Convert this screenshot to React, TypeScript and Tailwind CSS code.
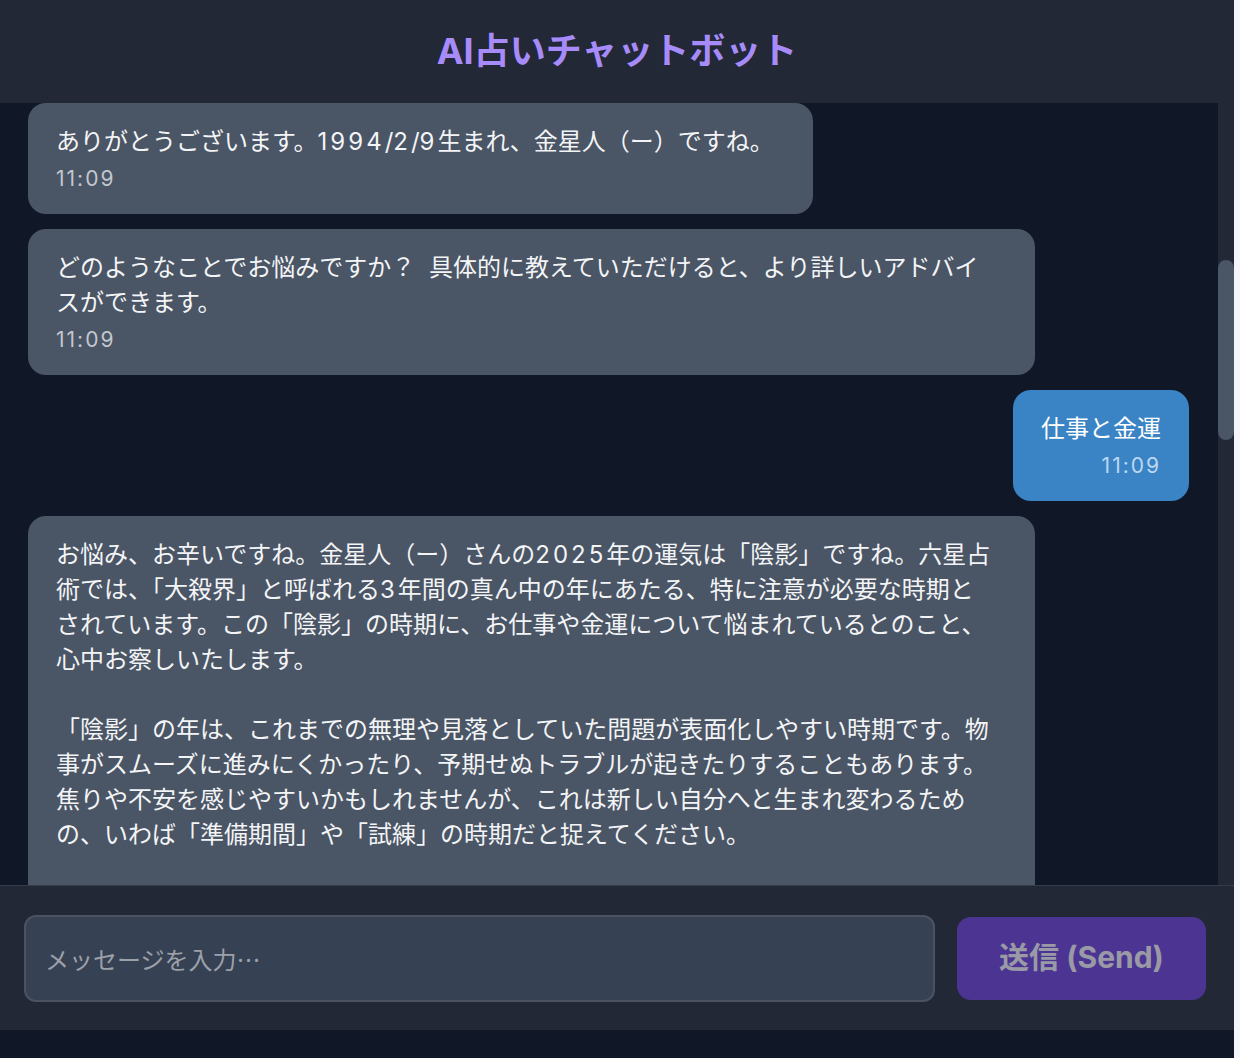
import { useState } from "react";

type Message = {
  id: number;
  role: "assistant" | "user";
  text: string;
  time: string;
};

const MESSAGES: Message[] = [
  {
    id: 1,
    role: "assistant",
    text: "ありがとうございます。1994/2/9生まれ、金星人（ー）ですね。",
    time: "11:09",
  },
  {
    id: 2,
    role: "assistant",
    text: "どのようなことでお悩みですか？ 具体的に教えていただけると、より詳しいアドバイスができます。",
    time: "11:09",
  },
  { id: 3, role: "user", text: "仕事と金運", time: "11:09" },
  {
    id: 4,
    role: "assistant",
    text:
      "お悩み、お辛いですね。金星人（ー）さんの2025年の運気は「陰影」ですね。六星占術では、「大殺界」と呼ばれる3年間の真ん中の年にあたる、特に注意が必要な時期とされています。この「陰影」の時期に、お仕事や金運について悩まれているとのこと、心中お察しいたします。\n\n「陰影」の年は、これまでの無理や見落としていた問題が表面化しやすい時期です。物事がスムーズに進みにくかったり、予期せぬトラブルが起きたりすることもあります。焦りや不安を感じやすいかもしれませんが、これは新しい自分へと生まれ変わるための、いわば「準備期間」や「試練」の時期だと捉えてください。\n\nこの時期は、新しいことに挑戦するよりも、今の足元を固めることを優先しましょう。",
    time: "11:09",
  },
];

// digits and spaces in the reference font run wide, so pad them a little
function Spaced({ text }: { text: string }) {
  const parts = text.split(/([0-9]+| )/);
  return (
    <>
      {parts.map((p, i) =>
        /^[0-9]+$/.test(p) ? (
          <span key={i} className="tracking-[3px]">
            {p}
          </span>
        ) : p === " " ? (
          <span key={i} className="tracking-[7px]">
            {p}
          </span>
        ) : (
          <span key={i}>{p}</span>
        )
      )}
    </>
  );
}

function Bubble({ msg }: { msg: Message }) {
  const isUser = msg.role === "user";
  return (
    <div className={`flex ${isUser ? "justify-end" : "justify-start"}`}>
      <div
        className={`max-w-[1007px] rounded-[18px] pt-[21px] pb-[20px] ${
          isUser ? "bg-[#3a83c4] px-[28px] text-white" : "bg-gray-600 pl-[28px] pr-[39px] text-gray-100"
        }`}
      >
        <p className="text-[24px] leading-[35px] whitespace-pre-wrap">
          <Spaced text={msg.text} />
        </p>
        <p
          className={`mt-[5px] text-[21px] leading-[30px] tracking-[2px] ${
            isUser ? "text-right text-[#bcd8f3]" : "text-[#c3c7cf]"
          }`}
        >
          {msg.time}
        </p>
      </div>
    </div>
  );
}

export default function App() {
  const [input, setInput] = useState("");

  return (
    <div className="flex min-h-[1058px] bg-[#f5f6fa] font-['Inter','Noto_Sans_CJK_JP',sans-serif]">
      <div className="w-[1234px] shrink-0 bg-gray-900">
        <div className="flex h-[1030px] flex-col">
          <header className="flex h-[103px] shrink-0 items-center justify-center bg-[#222836] pb-[2px]">
            <h1 className="text-[36px] font-bold text-[#a78bfa]">AI占いチャットボット</h1>
          </header>

          <main className="flex min-h-0 flex-1">
            <div className="flex flex-1 flex-col gap-[15px] overflow-hidden pl-7 pr-[29px]">
              {MESSAGES.map((m) => (
                <Bubble key={m.id} msg={m} />
              ))}
            </div>
            <div className="w-4 shrink-0 bg-[#222836]">
              <div className="mt-[157px] h-[180px] w-full rounded-full bg-gray-600" />
            </div>
          </main>

          <footer className="flex h-[145px] shrink-0 items-center gap-[22px] border-t border-[#343b49] bg-[#222836] pl-6 pr-7">
            <input
              value={input}
              onChange={(e) => setInput(e.target.value)}
              placeholder="メッセージを入力…"
              className="h-[87px] flex-1 rounded-[12px] border-2 border-[#4b5262] bg-gray-700 px-[19px] font-['Noto_Sans_CJK_JP',sans-serif] text-[24px] text-gray-100 outline-none placeholder:text-[#9ca0aa]"
            />
            <button
              disabled={!input}
              className="h-[83px] w-[249px] rounded-[14px] bg-[#4c3592] pb-[1px] text-[30px] font-bold text-[#9a9aa6]"
            >
              送信 (Send)
            </button>
          </footer>
        </div>
      </div>
    </div>
  );
}
